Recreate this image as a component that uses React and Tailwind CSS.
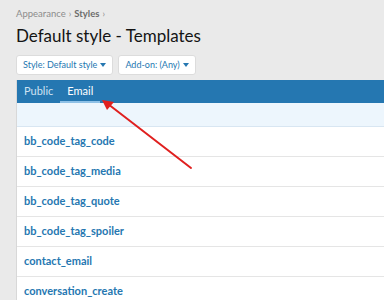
import React from 'react';

const templates = [
  'bb_code_tag_code',
  'bb_code_tag_media',
  'bb_code_tag_quote',
  'bb_code_tag_spoiler',
  'contact_email',
  'conversation_create',
];

const Caret = () => (
  <svg width="6" height="4" viewBox="0 0 6 4" className="ml-[3px] inline-block">
    <path d="M0 0h6L3 4z" fill="currentColor" />
  </svg>
);

export default function App() {
  return (
    <div
      className="relative h-[300px] w-[384px] overflow-hidden bg-[#eaeaea] pl-4"
      style={{ fontFamily: 'Lato, "Open Sans", sans-serif' }}
    >
      {/* breadcrumb */}
      <div className="flex items-center pt-[7px] text-[9.5px] leading-[14px] text-[#8c8c8c]">
        <span>Appearance</span>
        <span className="mx-[3px] text-[9px]">›</span>
        <span className="font-bold text-[#6d6d6d]">Styles</span>
        <span className="mx-[3px] text-[9px]">›</span>
      </div>
      <h1 className="mt-[4px] text-[17px] leading-[22px] text-[#141414]">Default style - Templates</h1>

      {/* filters */}
      <div className="mt-[8px] flex gap-[5px]">
        <button className="flex h-[20px] items-center rounded-[3px] border border-[#dcdcdc] bg-white px-[6px] text-[9px] text-[#2577b1]">
          <span>Style: Default style</span>
          <Caret />
        </button>
        <button className="flex h-[20px] items-center rounded-[3px] border border-[#dcdcdc] bg-white px-[6px] text-[9px] text-[#2577b1]">
          <span>Add-on: (Any)</span>
          <Caret />
        </button>
      </div>

      {/* panel */}
      <div className="mt-[5px] border-l border-[#d8d8d8] bg-white">
        <div className="flex h-[23px] items-end bg-[#2577b1] text-[11px]">
          <div className="flex h-full items-center px-[7px] text-[#cfe2f1]">Public</div>
          <div className="flex h-full items-center border-b-2 border-[#8fc1e6] px-[7px] pt-[2px] text-white">
            Email
          </div>
        </div>
        <div className="h-[24px] border-b border-[#d8e6f2] bg-[#edf6fd]" />
        {templates.map((t) => (
          <div
            key={t}
            className="flex h-[30px] items-center border-b border-[#e5e5e5] pl-[7px] text-[11px] font-bold text-[#2577b1]"
          >
            {t}
          </div>
        ))}
      </div>

      {/* annotation arrow */}
      <svg className="pointer-events-none absolute left-0 top-0" width="384" height="300">
        <line x1="191" y1="168" x2="108" y2="104" stroke="#e0201f" strokeWidth="2" strokeLinecap="round" />
        <path d="M102 100 L114 102 L107 110 Z" fill="#e0201f" />
      </svg>
    </div>
  );
}
